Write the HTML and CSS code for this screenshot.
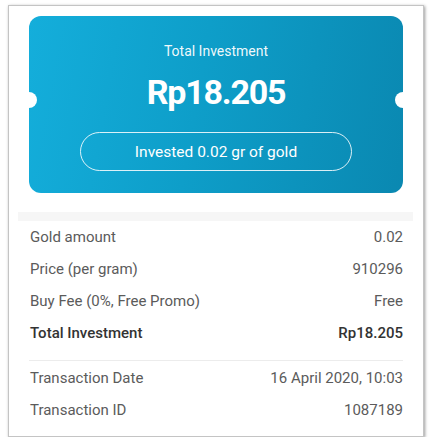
FILE: index.html
```html
<!DOCTYPE html>
<html>
<head>
<meta charset="utf-8">
<link rel="stylesheet" href="styles.css">
</head>
<body>
<div class="frame">
  <div class="ticket">
    <span class="notch notch-left"></span>
    <span class="notch notch-right"></span>
    <div class="ticket-title">Total Investment</div>
    <div class="ticket-amount">Rp18.205</div>
    <div class="ticket-pill">Invested 0.02 gr of gold</div>
  </div>
  <div class="band"></div>
  <div class="rows">
    <div class="row"><span>Gold amount</span><span>0.02</span></div>
    <div class="row"><span>Price (per gram)</span><span>910296</span></div>
    <div class="row"><span>Buy Fee (0%, Free Promo)</span><span>Free</span></div>
    <div class="row row-total"><span>Total Investment</span><span>Rp18.205</span></div>
    <div class="divider"></div>
    <div class="row"><span>Transaction Date</span><span>16 April 2020, 10:03</span></div>
    <div class="row"><span>Transaction ID</span><span>1087189</span></div>
  </div>
</div>
</body>
</html>
```

FILE: styles.css
```css
html, body {
  margin: 0;
  padding: 0;
  background: #ffffff;
}
body {
  font-family: Roboto, "Liberation Sans", sans-serif;
}
.frame {
  margin: 5px 0 0 8px;
  width: 416px;
  box-sizing: border-box;
  border: 1px solid #c4c4c4;
  box-shadow: 1px 1px 3px rgba(0, 0, 0, 0.4);
  background: #ffffff;
  padding: 10px 0 10px 0;
}
.ticket {
  position: relative;
  margin: 0 20px 0 20px;
  height: 177px;
  border-radius: 12px;
  background: linear-gradient(100deg, #14aedb 0%, #0e9ec9 45%, #0a88b1 100%);
  display: flex;
  flex-direction: column;
  align-items: center;
  padding-top: 27px;
  box-sizing: border-box;
  color: #ffffff;
}
.notch {
  position: absolute;
  top: 76px;
  width: 16px;
  height: 16px;
  border-radius: 50%;
  background: #ffffff;
}
.notch-left { left: -8px; }
.notch-right { right: -8px; }
.ticket-title {
  font-size: 14px;
  line-height: 16px;
  color: rgba(255, 255, 255, 0.95);
}
.ticket-amount {
  margin-top: 13px;
  font-size: 34px;
  line-height: 40px;
  font-weight: 700;
  letter-spacing: -1.2px;
}
.ticket-pill {
  margin-top: 20px;
  width: 272px;
  height: 39px;
  box-sizing: border-box;
  border: 1.5px solid rgba(255, 255, 255, 0.85);
  border-radius: 20px;
  display: flex;
  align-items: center;
  justify-content: center;
  font-size: 15.5px;
}
.band {
  margin: 19px 10px 0 9px;
  height: 9px;
  background: #f6f6f6;
}
.rows {
  margin: 0 20px 0 21px;
}
.row {
  display: flex;
  justify-content: space-between;
  font-size: 15px;
  line-height: 32px;
  color: #5b5b5b;
}
.row-total {
  color: #333333;
  font-weight: 500;
}
.divider {
  margin: 11px 0 1px -1px;
  height: 1px;
  background: #ececec;
}
```
